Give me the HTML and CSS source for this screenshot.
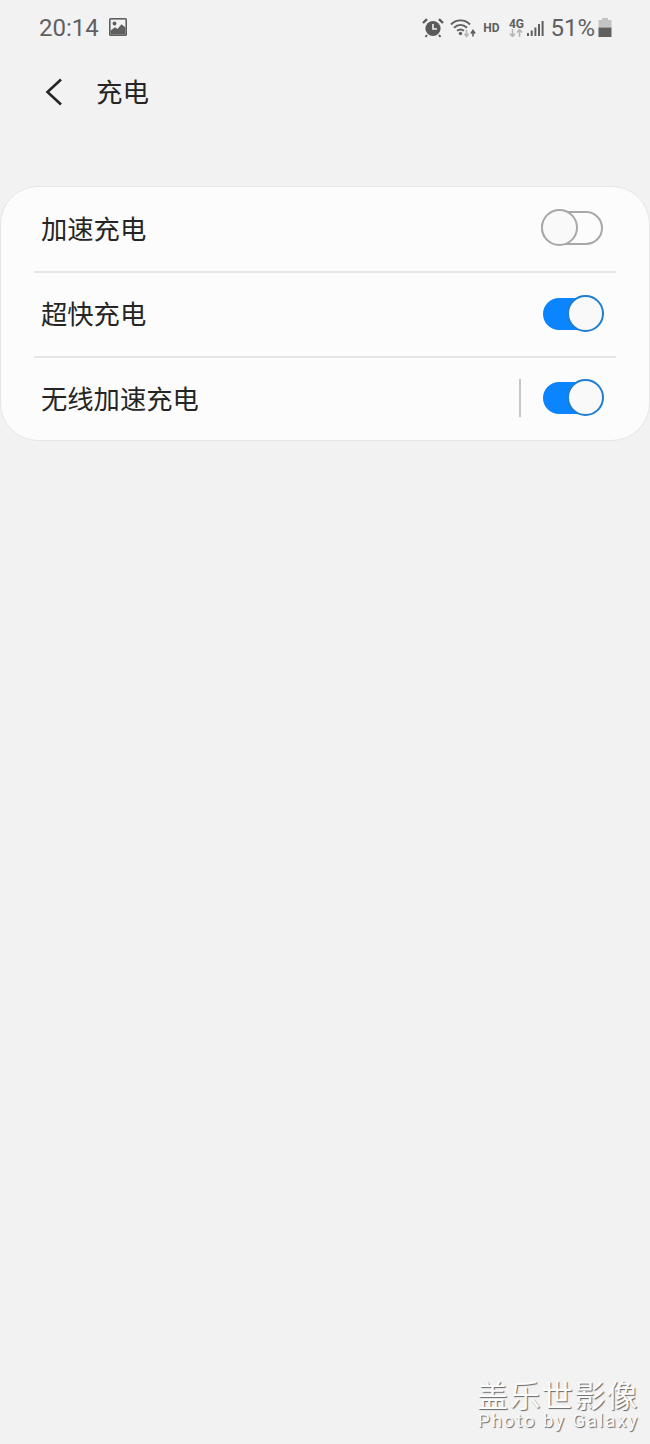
FILE: index.html
```html
<!DOCTYPE html>
<html lang="zh-CN">
<head>
    <meta charset="UTF-8">
    <meta name="viewport" content="width=device-width, initial-scale=1.0">
    <title>充电</title>
    <link rel="stylesheet" href="styles.css">
</head>
<body>

    <!-- Status bar -->
    <div class="status-bar">
        <div class="status-left">
            <span class="clock">20:14</span>
            <svg class="icon-gallery" width="18" height="18" viewBox="0 0 18 18">
                <rect x="0" y="0" width="18" height="18" rx="1.5" fill="#5f5f5f"/>
                <rect x="1.6" y="1.6" width="14.8" height="14.8" fill="#f2f2f2"/>
                <circle cx="5.5" cy="5.5" r="1.9" fill="#5f5f5f"/>
                <path d="M1.6 12.5 L6 9.2 L8.5 11 L12.5 6.2 L16.4 9.5 V16.4 H1.6 Z" fill="#5f5f5f"/>
            </svg>
        </div>
        <div class="status-right">
            <svg class="icon-alarm" width="22" height="20" viewBox="0 0 22 20">
                <circle cx="11" cy="10.5" r="7.6" fill="#5a5a5a"/>
                <path d="M11 6 V11 H15" fill="none" stroke="#f2f2f2" stroke-width="1.6"/>
                <path d="M1 5 L5 1.2 M21 5 L17 1.2" stroke="#5a5a5a" stroke-width="2.4" fill="none"/>
                <path d="M5 17 L3.5 19 M17 17 L18.5 19" stroke="#5a5a5a" stroke-width="2" fill="none"/>
            </svg>
            <svg class="icon-wifi" width="26" height="20" viewBox="0 0 26 20">
                <g fill="none" stroke="#5f5f5f" stroke-width="1.9">
                    <path d="M1 6.5 C6 1 15 1 20 6.5"/>
                    <path d="M4 9.8 C8 6 13 6 17 9.8"/>
                    <path d="M7 12.8 C9.5 10.8 11.5 10.8 14 12.8"/>
                </g>
                <circle cx="10.5" cy="15.5" r="1.7" fill="#5f5f5f"/>
                <path d="M16.5 12 V18 M14.5 15.8 L16.5 18.5 L18.5 15.8" fill="none" stroke="#b5b5b5" stroke-width="1.6"/>
                <path d="M23 18.5 V13 M21 15.5 L23 12.5 L25 15.5" fill="none" stroke="#5f5f5f" stroke-width="1.6"/>
            </svg>
            <span class="hd">HD</span>
            <div class="net">
                <span class="net-label">4G</span>
                <svg width="14" height="8" viewBox="0 0 14 8">
                    <path d="M3.5 0 V7 M1 4.5 L3.5 7.5 L6 4.5" fill="none" stroke="#b5b5b5" stroke-width="1.5"/>
                    <path d="M10.5 8 V1 M8 3.5 L10.5 0.5 L13 3.5" fill="none" stroke="#b5b5b5" stroke-width="1.5"/>
                </svg>
            </div>
            <svg class="icon-signal" width="17" height="17" viewBox="0 0 17 17">
                <rect x="0" y="13" width="2" height="3" fill="#5f5f5f"/>
                <rect x="3.7" y="10.5" width="2" height="5.5" fill="#5f5f5f"/>
                <rect x="7.4" y="7.5" width="2" height="8.5" fill="#5f5f5f"/>
                <rect x="11" y="4" width="2" height="12" fill="#5f5f5f"/>
                <rect x="14.6" y="1" width="2" height="15" fill="#5f5f5f"/>
            </svg>
            <span class="battery-text">51%</span>
            <svg class="icon-battery" width="14" height="20" viewBox="0 0 14 20">
                <rect x="4" y="0" width="6" height="3" fill="#c4c4c4"/>
                <rect x="0.5" y="2" width="13" height="7.5" fill="#c4c4c4"/>
                <rect x="0.5" y="9.5" width="13" height="9.5" fill="#5f5f5f"/>
            </svg>
        </div>
    </div>

    <!-- Title bar -->
    <header class="title-bar">
        <svg class="icon-back" width="18" height="28" viewBox="0 0 18 28">
            <path d="M16 1.5 L2.5 14 L16 26.5" fill="none" stroke="#252525" stroke-width="2.6"/>
        </svg>
        <h1 class="title">充电</h1>
    </header>

    <!-- Settings card -->
    <section class="card">
        <div class="row">
            <span class="row-label">加速充电</span>
            <span class="switch"></span>
        </div>
        <div class="row row-line">
            <span class="row-label">超快充电</span>
            <span class="switch switch-on"></span>
        </div>
        <div class="row row-line row-last">
            <span class="row-label">无线加速充电</span>
            <span class="divider"></span>
            <span class="switch switch-on"></span>
        </div>
    </section>

    <div class="spacer"></div>

    <!-- Watermark -->
    <footer class="watermark">
        <div class="mark-cn">盖乐世影像</div>
        <div class="mark-en">Photo by Galaxy</div>
    </footer>

</body>
</html>
```

FILE: styles.css
```css
html, body {
    height: 100%;
}

body {
    margin: 0;
    background-color: #f2f2f2;
    font-family: "Roboto", "Noto Sans CJK SC", sans-serif;
    display: flex;
    flex-direction: column;
    overflow: hidden;
}

/* Status bar */
.status-bar {
    height: 56px;
    padding: 0 38px 0 39px;
    display: flex;
    align-items: center;
    justify-content: space-between;
    flex-shrink: 0;
}

.status-left {
    display: flex;
    align-items: center;
    gap: 10px;
}

.clock {
    font-size: 24px;
    color: #5f5f5f;
}

.status-right {
    display: flex;
    align-items: center;
    color: #5f5f5f;
}

.icon-gallery { margin-top: -3px; }
.icon-wifi { margin-left: 6px; }

.hd {
    margin-left: 7px;
    font-size: 12px;
    font-weight: 700;
}

.net {
    margin-left: 9px;
    width: 16px;
    display: flex;
    flex-direction: column;
    align-items: center;
}

.net-label {
    font-size: 12px;
    font-weight: 700;
    line-height: 10px;
}

.icon-signal { margin-left: 3px; }

.battery-text {
    margin-left: 6px;
    font-size: 24px;
}

.icon-battery { margin-left: 3px; }

/* Title bar */
.title-bar {
    height: 72px;
    padding-left: 45px;
    display: flex;
    align-items: center;
    flex-shrink: 0;
}

.title {
    margin: 0 0 0 33px;
    padding-bottom: 4px;
    font-size: 26.5px;
    font-weight: 400;
    color: #252525;
}

/* Card */
.card {
    margin-top: 58px;
    height: 255px;
    box-sizing: border-box;
    background-color: #fcfcfc;
    border: 1px solid #e6e6e6;
    border-radius: 38px;
    padding: 0 33px;
    display: flex;
    flex-direction: column;
    flex-shrink: 0;
}

.row {
    height: 84px;
    box-sizing: border-box;
    display: flex;
    align-items: center;
    padding: 0 13px 0 7px;
}

.row-line {
    height: 85px;
    border-top: 2px solid #e6e6e6;
}

.row-last {
    height: 84px;
}

.row-label {
    flex: 1;
    padding-bottom: 4px;
    font-size: 26.3px;
    color: #252525;
}

.divider {
    width: 2px;
    height: 38px;
    margin-right: 22px;
    margin-bottom: 2px;
    background-color: #c8c8c8;
}

/* Switches */
.switch {
    position: relative;
    width: 62px;
    height: 34px;
    margin-bottom: 2px;
    box-sizing: border-box;
    border: 2px solid #a8a8a8;
    border-radius: 17px;
    background-color: #fcfcfc;
}

.switch::after {
    content: "";
    position: absolute;
    left: -2px;
    top: -4px;
    width: 37px;
    height: 37px;
    box-sizing: border-box;
    border: 2px solid #a8a8a8;
    border-radius: 50%;
    background-color: #f9f9f9;
}

.switch-on {
    width: 60px;
    height: 32px;
    border-color: #0a84ff;
    background-color: #0a84ff;
}

.switch-on::after {
    left: auto;
    right: -3px;
    top: -5px;
    border-color: #1f7ed0;
}

/* Watermark */
.spacer {
    flex: 1;
}

.watermark {
    padding: 0 11px 14px 0;
    text-align: right;
    color: #fbfbfb;
    text-shadow: 1px 1px 1px #666;
}

.mark-cn {
    font-size: 31px;
    line-height: 31px;
    letter-spacing: 1.4px;
}

.mark-en {
    font-size: 19px;
    line-height: 18px;
    letter-spacing: 1.7px;
}
```
